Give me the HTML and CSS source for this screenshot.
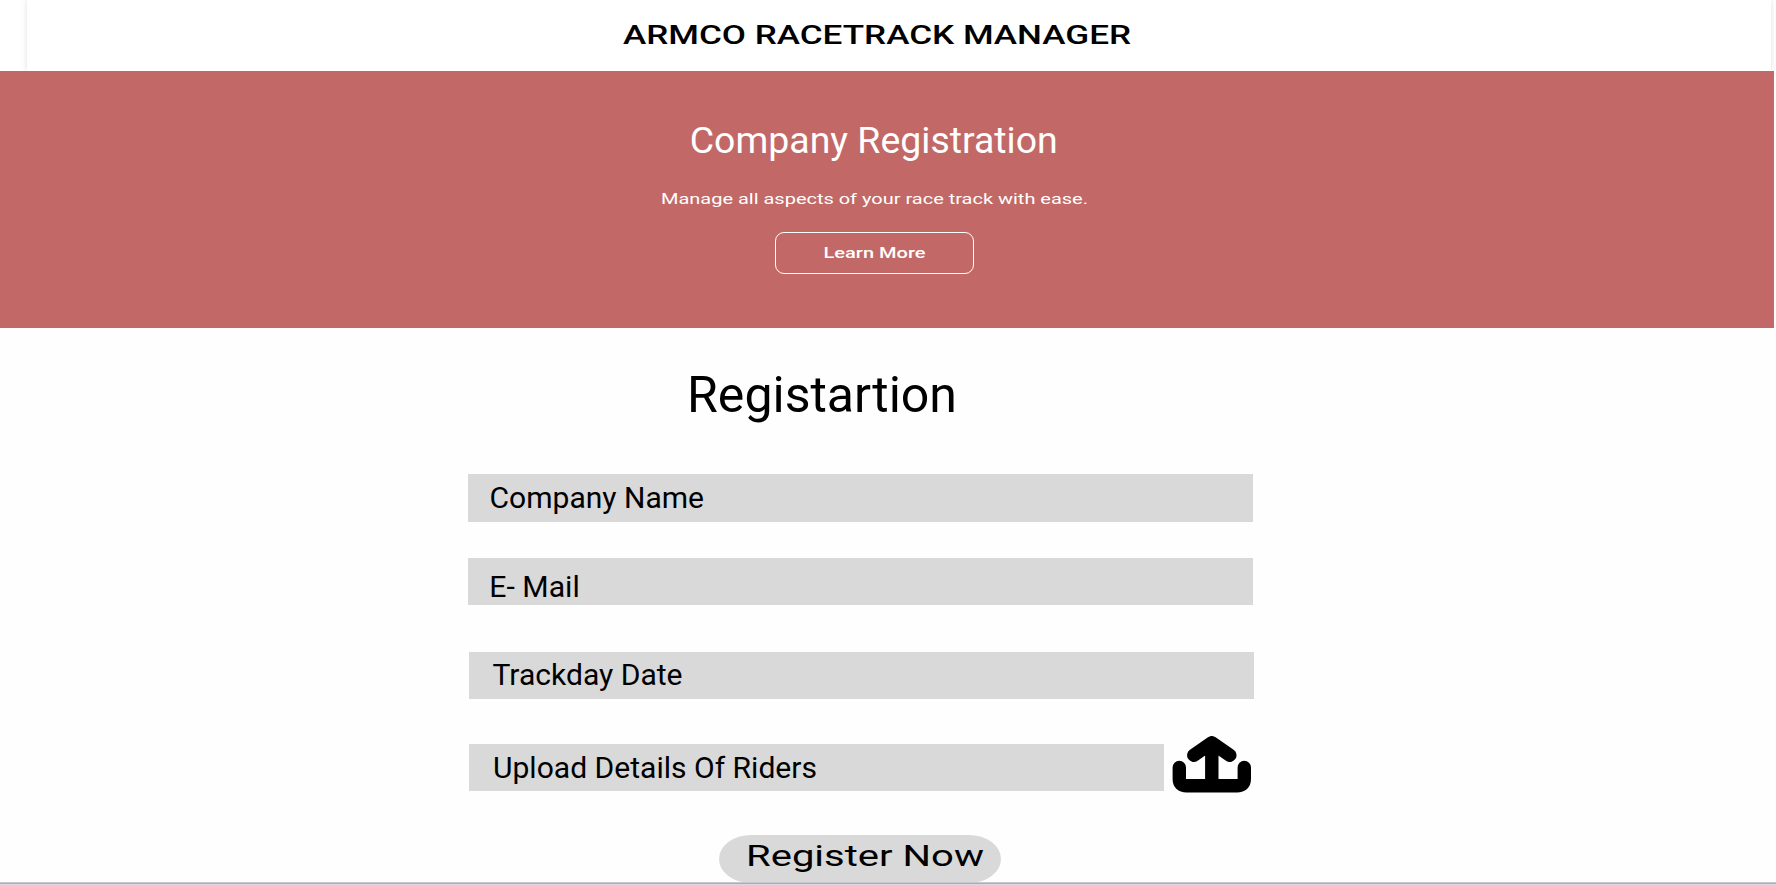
FILE: index.html
```html
<!DOCTYPE html>
<html lang="en">
<head>
<meta charset="utf-8">
<title>Armco Racetrack Manager</title>
<link rel="stylesheet" href="styles.css">
</head>
<body>
<div class="page">
  <header class="topbar">
    <div class="topbar-panel">
      <svg class="label brand" width="508" height="30"><text x="0" y="23.4" textLength="508" lengthAdjust="spacingAndGlyphs">ARMCO RACETRACK MANAGER</text></svg>
    </div>
  </header>
  <section class="hero">
    <svg class="label hero-title" width="368" height="48"><text x="0.7" y="36" textLength="368" lengthAdjust="spacingAndGlyphs">Company Registration</text></svg>
    <svg class="label hero-sub" width="427" height="20"><text x="0" y="15" textLength="427" lengthAdjust="spacingAndGlyphs">Manage all aspects of your race track with ease.</text></svg>
    <a class="learn"><svg class="label" width="102" height="20"><text x="0.5" y="15" textLength="102" lengthAdjust="spacingAndGlyphs">Learn More</text></svg></a>
  </section>
  <main class="form">
    <svg class="label form-title" width="270" height="62"><text x="0" y="46" textLength="270" lengthAdjust="spacingAndGlyphs">Registartion</text></svg>
    <div class="field company"><svg class="label" width="215" height="47"><text x="0.5" y="33.5" textLength="214.5" lengthAdjust="spacingAndGlyphs">Company Name</text></svg></div>
    <div class="field email"><svg class="label" width="91" height="47"><text x="0.3" y="38.7" textLength="90.5" lengthAdjust="spacingAndGlyphs">E- Mail</text></svg></div>
    <div class="field date"><svg class="label" width="190" height="47"><text x="0.5" y="33" textLength="190" lengthAdjust="spacingAndGlyphs">Trackday Date</text></svg></div>
    <div class="upload-row">
      <div class="field upload"><svg class="label" width="324" height="47"><text x="1" y="34" textLength="324" lengthAdjust="spacingAndGlyphs">Upload Details Of Riders</text></svg></div>
      <svg class="upload-icon" width="80" height="57" viewBox="0 0 80 57">
        <path d="M7.3 31.5V43Q7.3 49.7 14.5 49.7H65Q72.3 49.7 72.3 43V31.5M21.8 19.3L39.8 6.8L57.8 19.3M39.8 10V44"/>
      </svg>
    </div>
    <button class="register"><svg class="label" width="238" height="47"><text x="0" y="29.9" textLength="238" lengthAdjust="spacingAndGlyphs">Register Now</text></svg></button>
  </main>
  <div class="baseline"></div>
</div>
</body>
</html>
```
FILE: styles.css
```css
* { box-sizing: border-box; }
body { margin: 0; background: #fefefe; font-family: Roboto, sans-serif; }
.page { position: relative; width: 1776px; height: 885px; overflow: hidden; }
.label { display: block; overflow: visible; fill: currentColor; }

.topbar { height: 71px; padding: 0 5px 0 27px; overflow: hidden; background: #fff; }
.topbar-panel { height: 71px; padding: 21px 0 0 595.5px; background: #fff; box-shadow: 0 0 6px rgba(0, 0, 0, .13); }
.brand { font-size: 25px; font-weight: 500; }

.hero { width: 1774px; height: 257px; padding-top: 46px; background: #c26967; color: #fff; }
.hero-title { margin-left: 689px; font-size: 36.5px; }
.hero-sub { margin: 24px 0 0 660.5px; font-size: 14.2px; }
.learn { display: block; width: 199px; height: 42px; margin: 23px 0 0 775px; padding: 9.5px 0 0 47px; border: 1px solid #fff; border-radius: 9px; font-size: 14.2px; font-weight: 500; }

.form { display: flex; flex-direction: column; align-items: flex-start; padding-top: 38px; color: #000; }
.form-title { margin-left: 687px; font-size: 50px; }
.field { width: 785px; height: 47.3px; background: #d9d9d9; font-size: 30px; }
.company { margin: 46.3px 0 0 468.3px; padding-left: 20.7px; }
.email { margin: 36.4px 0 0 468.3px; padding-left: 20.7px; }
.date { margin: 46.4px 0 0 469.4px; padding-left: 23px; }
.upload-row { display: flex; margin: 45.2px 0 0 469.4px; height: 47.5px; gap: 7.3px; }
.upload { width: 695px; padding-left: 22.5px; }
.upload-icon { margin-top: -8px; fill: none; stroke: #000; stroke-width: 13.4; stroke-linecap: round; stroke-linejoin: round; }
.register { width: 282px; height: 48px; margin: 43.4px 0 0 719.3px; padding: 0 0 0 27px; border: 0; border-radius: 32px / 24px; background: #d9d9d9; color: #000; font: 30px Roboto, sans-serif; }
.baseline { position: absolute; left: 0; bottom: 0; width: 100%; height: 3px; background: linear-gradient(#c9c7ce 0 1px, #b3a9b6 1px 2px, #e0d6e4 2px); }
```
